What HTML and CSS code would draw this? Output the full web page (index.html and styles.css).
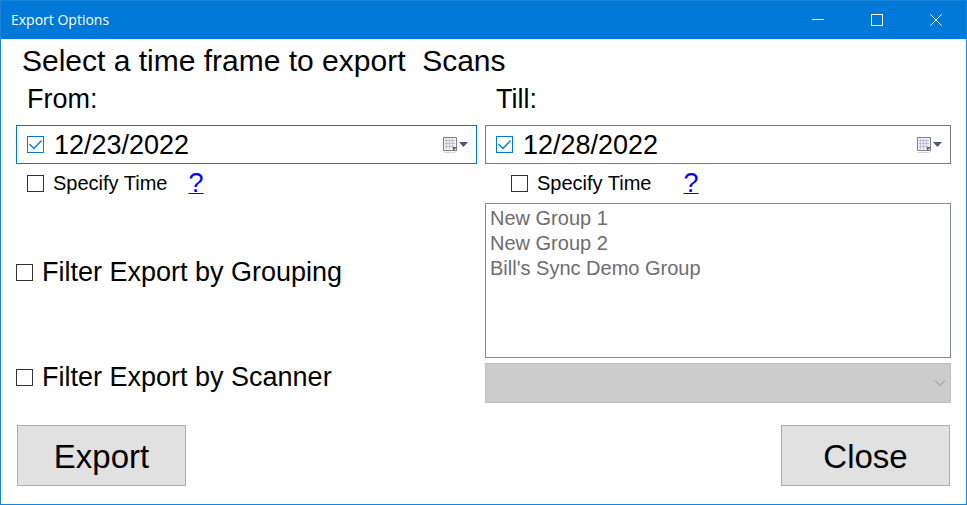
FILE: index.html
```html
<!DOCTYPE html>
<html lang="en">
<head>
<meta charset="utf-8">
<title>Export Options</title>
<link rel="stylesheet" href="styles.css">
</head>
<body>
<div class="window">
  <header class="titlebar">
    <span class="titlebar-text">Export Options</span>
    <button class="caption" aria-label="Minimize"><svg width="12" height="12" viewBox="0 0 12 12"><path d="M0 5.5h12"/></svg></button>
    <button class="caption" aria-label="Maximize"><svg width="12" height="12" viewBox="0 0 12 12"><path d="M.5.5h11v11H.5z"/></svg></button>
    <button class="caption" aria-label="Close window"><svg width="12" height="12" viewBox="0 0 12 12"><path d="M.3.3l11.4 11.4M11.7.3L.3 11.7"/></svg></button>
  </header>
  <main class="content">
    <h1 class="heading">Select a time frame to export&nbsp; Scans</h1>
    <div class="columns">
      <section class="range">
        <label class="range-label" for="from">From:</label>
        <div class="picker picker-active">
          <input class="check" type="checkbox" checked aria-label="Use start date">
          <input class="date" id="from" type="text" value="12/23/2022">
          <button class="drop" aria-label="Open start calendar">
            <svg width="26" height="18" viewBox="0 0 26 18"><path d="M2 16.500h11l2-2" fill="none" stroke="#d8d4d2"/><path d="M1.500 1.500h13v13h-13z" fill="#eef0f6" stroke="#877d7b"/><path d="M3 4.500h10M3 7.500h10M3 10.500h9M4.500 3v10M7.500 3v10M10.500 3v10" fill="none" stroke="#b9bfce"/><path d="M11 15v-4h4z" fill="#65616b"/><path d="M17 6h9l-4.500 5z" fill="#40588f"/></svg>
          </button>
        </div>
        <div class="time">
          <label class="option option-small"><input class="check" type="checkbox">Specify Time</label>
          <a class="help" href="#" aria-label="Help with start time">?</a>
        </div>
      </section>
      <section class="range">
        <label class="range-label" for="till">Till:</label>
        <div class="picker">
          <input class="check" type="checkbox" checked aria-label="Use end date">
          <input class="date" id="till" type="text" value="12/28/2022">
          <button class="drop" aria-label="Open end calendar">
            <svg width="26" height="18" viewBox="0 0 26 18"><path d="M2 16.500h11l2-2" fill="none" stroke="#d8d4d2"/><path d="M1.500 1.500h13v13h-13z" fill="#eef0f6" stroke="#877d7b"/><path d="M3 4.500h10M3 7.500h10M3 10.500h9M4.500 3v10M7.500 3v10M10.500 3v10" fill="none" stroke="#b9bfce"/><path d="M11 15v-4h4z" fill="#65616b"/><path d="M17 6h9l-4.500 5z" fill="#40588f"/></svg>
          </button>
        </div>
        <div class="time time-end">
          <label class="option option-small"><input class="check" type="checkbox">Specify Time</label>
          <a class="help" href="#" aria-label="Help with end time">?</a>
        </div>
      </section>
      <label class="option option-group"><input class="check" type="checkbox">Filter Export by Grouping</label>
      <select class="groups" multiple disabled aria-label="Groups">
        <option>New Group 1</option>
        <option>New Group 2</option>
        <option>Bill's Sync Demo Group</option>
      </select>
      <label class="option option-scanner"><input class="check" type="checkbox">Filter Export by Scanner</label>
      <div class="scanner">
        <select class="scanner-select" disabled aria-label="Scanner"></select>
        <svg class="scanner-arrow" width="12" height="8" viewBox="0 0 12 8"><path d="M1 1.500l5 5 5-5"/></svg>
      </div>
    </div>
    <footer class="actions">
      <button class="action">Export</button>
      <button class="action">Close</button>
    </footer>
  </main>
</div>
</body>
</html>
```
FILE: styles.css
```css
* {
  box-sizing: border-box;
}

body {
  margin: 0;
  font-family: "Liberation Sans", Arial, sans-serif;
  font-size: 27px;
  color: #000;
}

button,
input,
select {
  margin: 0;
  font: inherit;
  color: inherit;
}

.window {
  min-height: 100vh;
  border: 1px solid #1883d7;
  background: #fff;
}

.titlebar {
  display: flex;
  height: 38px;
  padding: 0 1px 0 10px;
  align-items: center;
  background: #0078d7;
  color: #fff;
}

.titlebar-text {
  flex: 1;
  padding-bottom: 2px;
  font: 14px "Open Sans", sans-serif;
}

.caption {
  display: flex;
  width: 59px;
  height: 38px;
  padding: 0;
  align-items: center;
  justify-content: center;
  border: 0;
  background: none;
}

.caption svg {
  fill: none;
  stroke: #fff;
}

.content {
  padding: 4px 15px 18px;
}

.heading {
  margin: 0 0 0 6px;
  font-size: 30px;
  font-weight: 400;
  line-height: 36px;
}

.columns {
  display: grid;
  grid-template-columns: 461fr 466fr;
  column-gap: 8px;
}

.range-label {
  display: block;
  padding: 2px 11px 8px;
  line-height: 36px;
}

.picker {
  display: flex;
  height: 39px;
  padding: 0 8px 0 10px;
  align-items: center;
  border: 1px solid #7a7a7a;
}

.picker-active {
  border-color: #0078d7;
}

.date {
  flex: 1;
  min-width: 0;
  height: 37px;
  padding: 2px 0 0 10px;
  border: 0;
  outline: 0;
  background: none;
}

.drop {
  display: flex;
  padding: 0;
  border: 0;
  background: none;
}

.check {
  flex: none;
  width: 17px;
  height: 17px;
  appearance: none;
  border: 1px solid #333;
  background: #fff;
}

.check:checked {
  border-color: #0078d7;
  background: url("data:image/svg+xml,%3Csvg xmlns='http://www.w3.org/2000/svg' viewBox='0 0 15 15'%3E%3Cpath d='M1.500 7l4.500 4.500 7.500-8' fill='none' stroke='%230078d7' stroke-width='1.300'/%3E%3C/svg%3E");
}

.time {
  display: flex;
  height: 39px;
  padding-left: 11px;
  align-items: center;
  gap: 21px;
}

.time-end {
  padding-left: 26px;
  gap: 32px;
}

.option {
  display: flex;
  align-items: center;
  gap: 9px;
}

.option-small {
  font-size: 20px;
}

.option-group {
  padding-bottom: 16px;
}

.option-scanner {
  padding-bottom: 6px;
}

.help {
  color: #00f;
  text-decoration-thickness: 1px;
}

.groups {
  width: 100%;
  height: 155px;
  padding: 3px 0;
  border: 1px solid #828790;
  border-radius: 0;
  background: #fff;
  color: #6d6d6d;
  font-size: 20px;
  overflow: hidden;
  opacity: 1;
}

.groups option {
  padding: 0 4px;
  line-height: 25px;
  min-height: 25px;
  color: #6d6d6d;
}

.scanner {
  display: grid;
  margin-top: 5px;
  align-items: center;
}

.scanner-select,
.scanner-arrow {
  grid-area: 1 / 1;
}

.scanner-select {
  width: 100%;
  height: 40px;
  appearance: none;
  border: 1px solid #bfbfbf;
  border-radius: 0;
  background: #ccc;
  opacity: 1;
}

.scanner-arrow {
  margin-right: 5px;
  justify-self: end;
  fill: none;
  stroke: #aaa;
  stroke-width: 1.5;
  pointer-events: none;
}

.actions {
  display: flex;
  margin-top: 22px;
  padding: 0 1px;
  justify-content: space-between;
}

.action {
  width: 169px;
  height: 61px;
  padding: 2px 0 0;
  border: 1px solid #adadad;
  background: #e1e1e1;
  font-size: 33px;
}
```
